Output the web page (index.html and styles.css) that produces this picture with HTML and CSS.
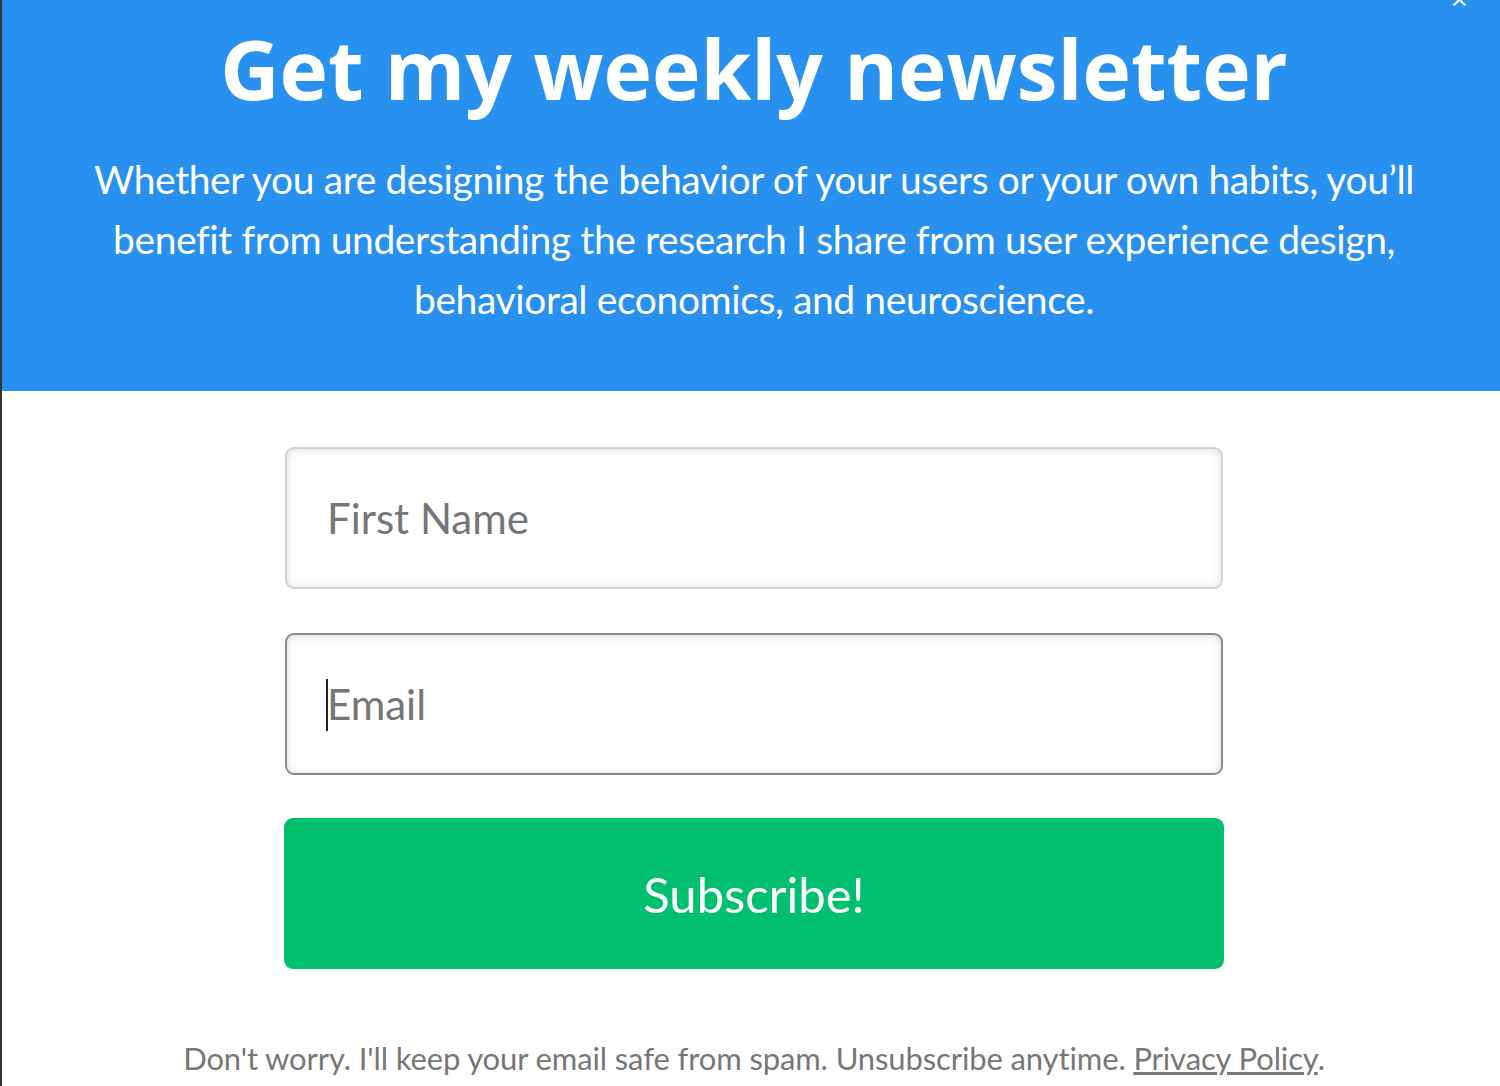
FILE: index.html
```
<!DOCTYPE html>
<html lang="en">
<head>
    <meta charset="UTF-8">
    <title>Newsletter</title>
    <link rel="stylesheet" href="styles.css">
</head>
<body>
    <div class="popup">
        <span class="close">×</span>

        <div class="popup-header">
            <h1>Get my weekly newsletter</h1>
            <p class="intro">Whether you are designing the behavior of your users or your own habits, you’ll benefit from understanding the research I share from user experience design, behavioral economics, and neuroscience.</p>
        </div>

        <div class="popup-body">
            <form class="signup-form" onsubmit="return false">
                <input type="text" class="field" placeholder="First Name">
                <div class="field-wrap">
                    <input type="email" class="field field-focus" placeholder="Email">
                    <span class="caret"></span>
                </div>
                <button type="submit" class="subscribe">Subscribe!</button>
            </form>
            <p class="note">Don't worry. I'll keep your email safe from spam. Unsubscribe anytime. <a href="#">Privacy Policy</a>.</p>
        </div>
    </div>
</body>
</html>
```

FILE: styles.css
```
body {
    margin: 0;
    background: white;
    font-family: 'Lato', sans-serif;
}

.popup {
    position: relative;
    border-left: 2px solid #333;
    min-height: 1086px;
    box-sizing: border-box;
}

.close {
    position: absolute;
    top: -22px;
    right: 32px;
    color: white;
    font-size: 30px;
    font-family: 'Open Sans', sans-serif;
}

.popup-header {
    background: #2891f0;
    color: white;
    text-align: center;
    padding: 18px 20px 62px;
}

.popup-header h1 {
    font-family: 'Open Sans', sans-serif;
    font-weight: 700;
    font-size: 82px;
    line-height: 100px;
    margin: 0 0 31px;
    padding-left: 6px;
}

.intro {
    font-size: 39px;
    letter-spacing: -0.4px;
    line-height: 60px;
    margin: 0 auto;
    max-width: 1340px;
    padding-left: 6px;
}

.popup-body {
    padding: 56px 0 0 6px;
    text-align: center;
}

.signup-form {
    width: 940px;
    margin: 0 auto;
    display: flex;
    flex-direction: column;
    gap: 44px;
}

.field-wrap {
    position: relative;
    display: flex;
}

.field {
    height: 142px;
    width: 938px;
    margin-left: 1px;
    box-sizing: border-box;
    border: 2px solid #d2d2d2;
    border-radius: 9px;
    padding: 0 40px;
    font-family: 'Lato', sans-serif;
    font-size: 42px;
    color: #333;
    background: white;
    box-shadow: inset 0 1px 9px rgba(0, 0, 0, 0.14);
    outline: none;
}

.field::placeholder {
    color: #767676;
}

.field-focus {
    border-color: #8a8a8a;
}

.caret {
    position: absolute;
    left: 42px;
    top: 46px;
    width: 2px;
    height: 52px;
    background: #222;
}

.subscribe {
    height: 151px;
    border: none;
    border-radius: 9px;
    background: #00c06f;
    color: white;
    font-family: 'Lato', sans-serif;
    font-size: 49px;
    cursor: pointer;
    margin-top: -1px;
}

.note {
    margin: 70px 0 0;
    font-size: 31px;
    letter-spacing: -0.12px;
    color: #777;
}

.note a {
    color: #777;
}
```
